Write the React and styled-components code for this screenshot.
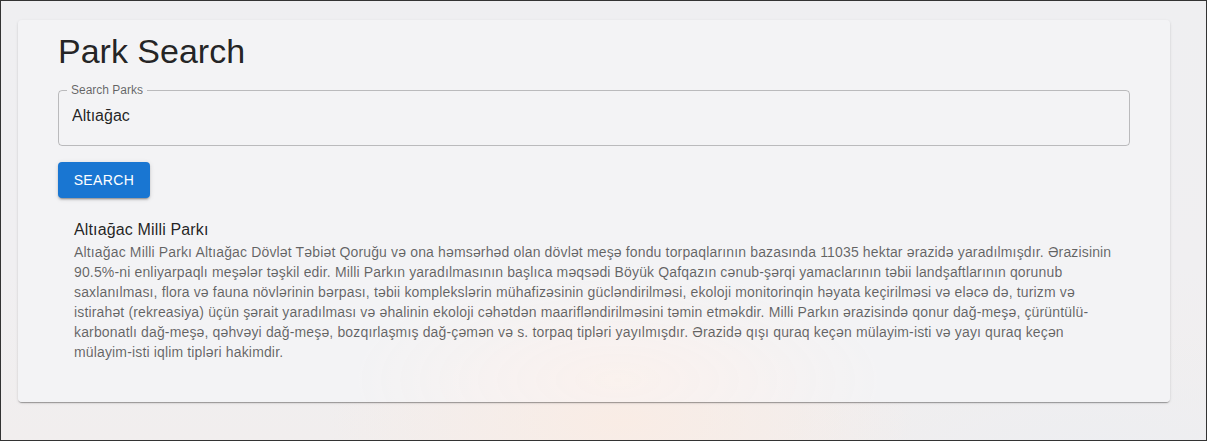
import React, { useState } from 'react';
import styled, { createGlobalStyle } from 'styled-components';

const GlobalStyle = createGlobalStyle`
  html, body {
    margin: 0;
    padding: 0;
  }
  body {
    font-family: "Liberation Sans", Arial, Helvetica, sans-serif;
    -webkit-font-smoothing: antialiased;
  }
  * {
    box-sizing: border-box;
  }
`;

const Page = styled.div`
  width: 1207px;
  height: 441px;
  border: 1px solid #333;
  padding: 19px 36px 0 17px;
  background:
    radial-gradient(ellipse 420px 180px at 620px 420px, rgba(250, 236, 228, 0.9), rgba(250, 236, 228, 0) 70%),
    radial-gradient(ellipse 500px 200px at 1100px 470px, rgba(236, 238, 242, 0.9), rgba(236, 238, 242, 0) 70%),
    linear-gradient(180deg, #efeff1 0%, #f0eff1 60%, #f1eeee 100%);
  overflow: hidden;
`;

const Card = styled.main`
  width: 1152px;
  height: 382px;
  border-radius: 4px;
  padding: 10px 40px 0 40px;
  background:
    radial-gradient(ellipse 380px 160px at 600px 360px, rgba(255, 240, 232, 0.55), rgba(255, 240, 232, 0) 70%),
    rgba(243, 243, 245, 0.9);
  box-shadow:
    0px 2px 1px -1px rgba(0, 0, 0, 0.2),
    0px 1px 1px 0px rgba(0, 0, 0, 0.14),
    0px 1px 3px 0px rgba(0, 0, 0, 0.12);
`;

const Title = styled.h1`
  margin: 0;
  font-size: 34px;
  line-height: 42px;
  font-weight: 400;
  color: rgba(0, 0, 0, 0.87);
`;

const Field = styled.div`
  position: relative;
  margin: 18px 0 8px;
  height: 56px;
`;

const Outline = styled.fieldset`
  position: absolute;
  inset: -5px 0 0 0;
  margin: 0;
  padding: 0 8px;
  border: 1px solid rgba(0, 0, 0, 0.23);
  border-radius: 4px;
  pointer-events: none;
  legend {
    padding: 0 4px;
    font-size: 12px;
    line-height: 11px;
    color: rgba(0, 0, 0, 0.6);
    white-space: nowrap;
  }
`;

const Input = styled.input`
  display: block;
  width: 100%;
  height: 56px;
  border: 0;
  outline: none;
  background: transparent;
  padding: 0 14px 4px;
  font-family: inherit;
  font-size: 16px;
  color: rgba(0, 0, 0, 0.87);
`;

const Button = styled.button`
  display: block;
  margin: 16px 0 0;
  height: 36px;
  width: 92px;
  padding: 6px 0;
  border: 0;
  border-radius: 4px;
  background: #1976d2;
  color: #fff;
  font-family: inherit;
  font-size: 14px;
  letter-spacing: 0.4px;
  text-transform: uppercase;
  box-shadow:
    0px 3px 1px -2px rgba(0, 0, 0, 0.2),
    0px 2px 2px 0px rgba(0, 0, 0, 0.14),
    0px 1px 5px 0px rgba(0, 0, 0, 0.12);
  cursor: pointer;
`;

const Results = styled.ul`
  list-style: none;
  margin: 0;
  padding: 8px 0;
`;

const Result = styled.li`
  padding: 8px 16px;
`;

const ResultName = styled.div`
  margin-top: 4px;
  font-size: 16px;
  line-height: 24px;
  color: rgba(0, 0, 0, 0.87);
  letter-spacing: 0.15px;
`;

const ResultText = styled.p`
  margin: 0;
  font-size: 14px;
  line-height: 20px;
  color: rgba(0, 0, 0, 0.6);
  letter-spacing: 0.15px;
`;

const parks = [
  {
    name: 'Altıağac Milli Parkı',
    text:
      'Altıağac Milli Parkı Altıağac Dövlət Təbiət Qoruğu və ona həmsərhəd olan dövlət meşə fondu torpaqlarının bazasında 11035 hektar ərazidə yaradılmışdır. Ərazisinin 90.5%-ni enliyarpaqlı meşələr təşkil edir. Milli Parkın yaradılmasının başlıca məqsədi Böyük Qafqazın cənub-şərqi yamaclarının təbii landşaftlarının qorunub saxlanılması, flora və fauna növlərinin bərpası, təbii komplekslərin mühafizəsinin gücləndirilməsi, ekoloji monitorinqin həyata keçirilməsi və eləcə də, turizm və istirahət (rekreasiya) üçün şərait yaradılması və əhalinin ekoloji cəhətdən maarifləndirilməsini təmin etməkdir. Milli Parkın ərazisində qonur dağ-meşə, çürüntülü-karbonatlı dağ-meşə, qəhvəyi dağ-meşə, bozqırlaşmış dağ-çəmən və s. torpaq tipləri yayılmışdır. Ərazidə qışı quraq keçən mülayim-isti və yayı quraq keçən mülayim-isti iqlim tipləri hakimdir.',
  },
];

const App = () => {
  const [query, setQuery] = useState('Altıağac');

  return (
    <>
      <GlobalStyle />
      <Page>
        <Card>
          <Title>Park Search</Title>
          <Field>
            <Input value={query} onChange={(e) => setQuery(e.target.value)} />
            <Outline>
              <legend>Search Parks</legend>
            </Outline>
          </Field>
          <Button type="button">Search</Button>
          <Results>
            {parks.map((park) => (
              <Result key={park.name}>
                <ResultName>{park.name}</ResultName>
                <ResultText>{park.text}</ResultText>
              </Result>
            ))}
          </Results>
        </Card>
      </Page>
    </>
  );
};

export default App;
